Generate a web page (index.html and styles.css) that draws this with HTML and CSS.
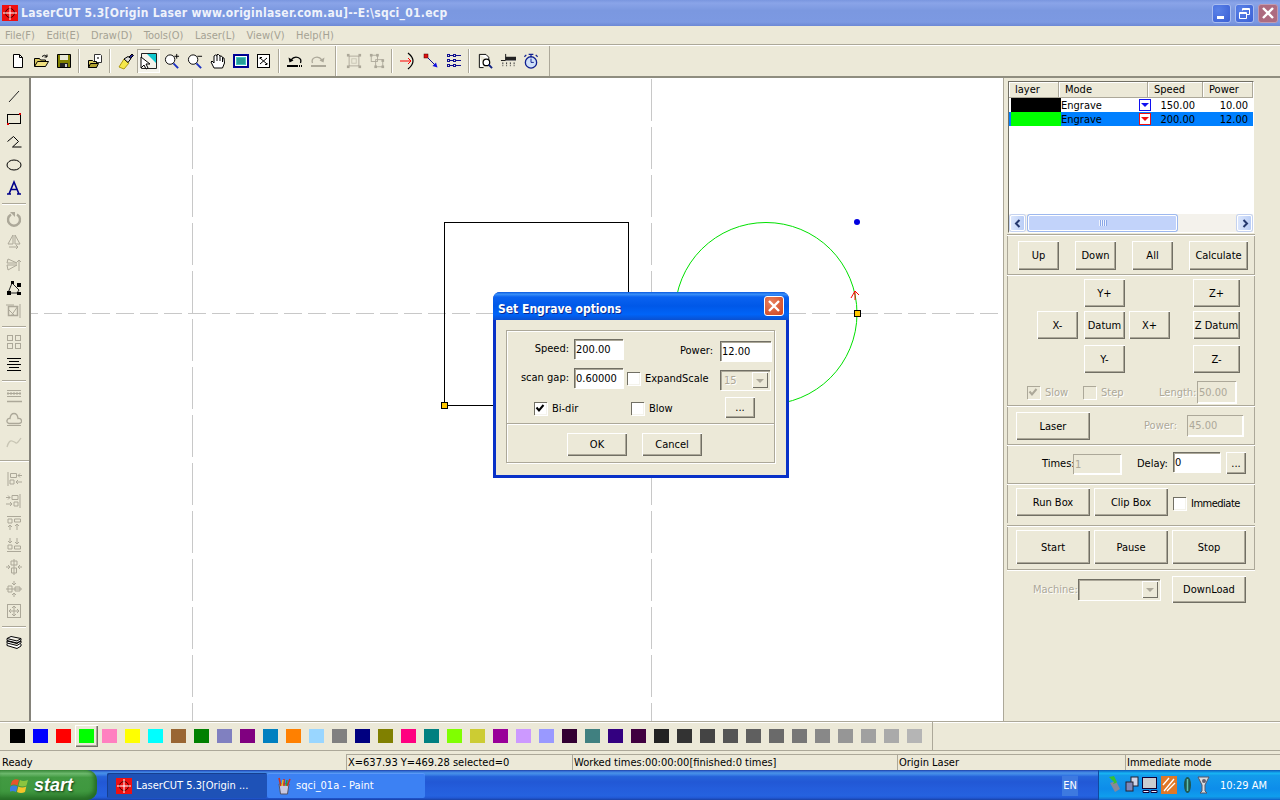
FILE: index.html
```html
<!DOCTYPE html>
<html lang="en">
<head>
    <meta charset="UTF-8">
    <title>LaserCUT 5.3</title>
    <link rel="stylesheet" href="styles.css">
</head>
<body>
<div class="screen">

    <div class="titlebar">
        <svg class="app-icon" width="16" height="16" viewBox="0 0 16 16"><rect width="16" height="16" fill="#f01010"/><circle cx="8" cy="8" r="4.5" fill="none" stroke="#400"/><path d="M8 1v14M1 8h14" stroke="#fff"/></svg>
        <span class="title-text">LaserCUT 5.3[Origin Laser www.originlaser.com.au]--E:\sqci_01.ecp</span>
        <div class="win-btns">
            <div class="win-btn"><svg width="19" height="19" viewBox="0 0 19 19"><rect x="5" y="12" width="7" height="3" fill="#fff"/></svg></div>
            <div class="win-btn"><svg width="19" height="19" viewBox="0 0 19 19"><path d="M4.5 8.5h7v6h-7zM4.5 9.5h7M7.5 6.5v-2h7v6h-3M7.5 5.5h7" fill="none" stroke="#fff"/></svg></div>
            <div class="win-btn close"><svg width="20" height="19" viewBox="0 0 20 19"><path d="M5 4l10 10M15 4L5 14" stroke="#fff" stroke-width="2.4"/></svg></div>
        </div>
    </div>

    <div class="menubar">
        <span>File(F)</span><span>Edit(E)</span><span>Draw(D)</span><span>Tools(O)</span><span>Laser(L)</span><span>View(V)</span><span>Help(H)</span>
    </div>

    <div class="toolbar">
        <div class="tb-group first">
            <div class="tb"><svg viewBox="0 0 16 16"><path d="M3.5 1.5h6l3 3v10h-9z" fill="#fff" stroke="#000"/><path d="M9.5 1.5v3h3" fill="none" stroke="#000"/></svg></div>
            <div class="tb"><svg viewBox="0 0 16 16"><path d="M1.5 5.500h5l1 1.500h5v6h-11z" fill="#d8c860" stroke="#000"/><path d="M1.500 13.500l3-5h11l-3 5z" fill="#f0e080" stroke="#000"/><path d="M9 3.500q2.500-2.500 5 0M14 1.500v2.500h-2.500" fill="none" stroke="#000"/></svg></div>
            <div class="tb"><svg viewBox="0 0 16 16"><path d="M1.500 1.500h13v13h-13z" fill="#808000" stroke="#000"/><rect x="4" y="2" width="8" height="5" fill="#e8e8d8"/><rect x="4" y="10" width="8" height="4" fill="#222"/><rect x="9" y="11" width="2" height="3" fill="#ccc"/></svg></div>
            <div class="tb-sep"></div>
            <div class="tb"><svg viewBox="0 0 16 16"><path d="M7.500 1.500h6l1 1v7h-7z" fill="#fff" stroke="#333"/><rect x="10" y="4" width="2" height="2" fill="#777"/><path d="M1.500 7.500h4l1 1h3v6h-8z" fill="#d8c860" stroke="#000"/><path d="M1.500 14.500l2-4h8l-2 4z" fill="#b0a030" stroke="#000"/></svg></div>
            <div class="tb-sep"></div>
            <div class="tb"><svg viewBox="0 0 16 16"><path d="M1 14l5-8 5 4-5 6z" fill="#f6e84a" stroke="#b09a10"/><path d="M6 6l4 3.500 3-4-3-2z" fill="#ddd" stroke="#000"/><path d="M11 4l3-3 1.500 1.500-3 3z" fill="#202090" stroke="#000"/></svg></div>
            <div class="tb pressed"><svg viewBox="0 0 18 18"><path d="M1.500 1.500h15v15h-15z" fill="none" stroke="#222"/><path d="M7 2h9v9z" fill="#10c8d0"/><path d="M1 5l0 11 3-3 2 4 2-1-2-4h4z" fill="#fff" stroke="#000"/></svg></div>
            <div class="tb"><svg viewBox="0 0 17 17"><circle cx="6.500" cy="7" r="5" fill="#fff" stroke="#000"/><path d="M10 11l5 5" stroke="#1a30c0" stroke-width="2"/><path d="M11 3.500h5M13.500 1v5" stroke="#000"/></svg></div>
            <div class="tb"><svg viewBox="0 0 17 17"><circle cx="6.500" cy="7" r="5" fill="#fff" stroke="#000"/><path d="M10 11l5 5" stroke="#1a30c0" stroke-width="2"/><path d="M11 3.500h5" stroke="#000"/></svg></div>
            <div class="tb"><svg viewBox="0 0 16 16"><path d="M4 15L1 9l1-1 2 2V3l1.500-1L7 3V1.500h1.500L10 3l1.500 0 1 1.500 1.500.5.500 5-2 5z" fill="#fff" stroke="#000"/><path d="M7 3v5M10 3v5M12.500 4.500V9" stroke="#000"/></svg></div>
            <div class="tb"><svg viewBox="0 0 16 16"><rect x=".5" y="1.500" width="15" height="13" fill="#fff" stroke="#0000a0" stroke-width="1"/><rect x="1.500" y="2.500" width="13" height="11" fill="none" stroke="#000080"/><rect x="3" y="4" width="10" height="8" fill="#40c8c0"/><path d="M4 6h8M4 8h8M4 10h8" stroke="#107070"/></svg></div>
            <div class="tb"><svg viewBox="0 0 16 16"><rect x="1.500" y="1.500" width="12" height="13" fill="#fff" stroke="#000"/><path d="M4 11l7-6M4 6v-1.500h2M11 10v1.500h-2M4 5l7 6" stroke="#000" fill="none"/></svg></div>
            <div class="tb-sep"></div>
            <div class="tb"><svg viewBox="0 0 16 16"><path d="M4 7q3-4 7-2.500t2.500 5.500" fill="none" stroke="#000" stroke-width="1.300"/><path d="M1.500 4.500l1 5 4-2z" fill="#000"/><path d="M0 13h11" stroke="#000" stroke-width="2"/><path d="M12 13h3" stroke="#000" stroke-dasharray="1 1" stroke-width="2"/></svg></div>
            <div class="tb off"><svg viewBox="0 0 16 16"><path d="M12 7q-3-4-7-2.500T2.500 10" fill="none" stroke="#aca899" stroke-width="1.300"/><path d="M14.500 4.500l-1 5-4-2z" fill="#aca899"/><path d="M1 13h15" stroke="#aca899" stroke-width="2"/></svg></div>
        </div>
        <div class="tb-group second">
            <div class="tb"><svg viewBox="0 0 18 18"><rect x="3.500" y="3.500" width="11" height="11" fill="none" stroke="#aca899"/><rect x="1" y="1" width="3" height="3" fill="#aca899"/><rect x="14" y="1" width="3" height="3" fill="#aca899"/><rect x="1" y="14" width="3" height="3" fill="#aca899"/><rect x="14" y="14" width="3" height="3" fill="#aca899"/><rect x="6.500" y="6.500" width="5" height="5" fill="none" stroke="#c8c5b4"/></svg></div>
            <div class="tb"><svg viewBox="0 0 18 18"><rect x="2.500" y="2.500" width="7" height="7" fill="none" stroke="#aca899"/><rect x="7.500" y="7.500" width="8" height="8" fill="none" stroke="#aca899"/><rect x="1" y="1" width="3" height="3" fill="#aca899"/><rect x="8" y="1" width="3" height="3" fill="#aca899"/><rect x="14" y="7" width="3" height="3" fill="#aca899"/><rect x="14" y="14" width="3" height="3" fill="#aca899"/><rect x="6" y="14" width="3" height="3" fill="#aca899"/></svg></div>
            <div class="tb-sep"></div>
            <div class="tb"><svg viewBox="0 0 16 16"><path d="M0 8h11" stroke="#f00"/><path d="M8 5l3 3-3 3" fill="none" stroke="#f00"/><path d="M8 0Q18 8 8 16" fill="none" stroke="#000" stroke-width="1.200"/></svg></div>
            <div class="tb"><svg viewBox="0 0 16 16"><rect x="1" y="1" width="4" height="4" fill="#e01010" stroke="#400" stroke-width=".5"/><path d="M5 5l8 8" stroke="#10108a"/><path d="M14.500 14.500l-5-1.500 3.500-3.500z" fill="#1010e0"/></svg></div>
            <div class="tb"><svg viewBox="0 0 16 16"><g fill="none" stroke="#101090"><rect x="1.500" y="1.500" width="2" height="2"/><rect x="7.500" y="1.500" width="2" height="2"/><rect x="1.500" y="6.500" width="2" height="2"/><rect x="7.500" y="6.500" width="2" height="2"/><rect x="1.500" y="11.500" width="2" height="2"/><rect x="7.500" y="11.500" width="2" height="2"/><path d="M4 2.500h3M10 2.500h5M4 7.500h3M10 7.500h5M4 12.500h3M10 12.500h5"/></g></svg></div>
            <div class="tb-sep"></div>
            <div class="tb"><svg viewBox="0 0 17 17"><path d="M2.500 1.500h7l3 3v3M7 15.500H2.500v-14" fill="#fff" stroke="#000"/><circle cx="10" cy="10" r="3.500" fill="#fff" stroke="#000" stroke-width="1.300"/><path d="M12.500 12.500l3.500 3.500" stroke="#102080" stroke-width="2"/></svg></div>
            <div class="tb"><svg viewBox="0 0 17 17"><path d="M6 4h11v4H6z" fill="#222"/><path d="M1 8h5M6 1v7" stroke="#111"/><path d="M3 10v4M7 10v4M11 10v4M15 10v4" stroke="#333" stroke-dasharray="2 1"/><path d="M6 8h11" stroke="#888"/></svg></div>
            <div class="tb"><svg viewBox="0 0 17 17"><circle cx="8.500" cy="10" r="6" fill="#cfe0f8" stroke="#102090" stroke-width="1.400"/><path d="M8.500 6v4h3" fill="none" stroke="#102090"/><path d="M6 1.500h5M8.500 1.500v3M1.500 4l2-2M15.500 4l-2-2" stroke="#102090" stroke-width="1.300"/></svg></div>
        </div>
    </div>

    <div class="main">
        <div class="lefttools">
            <div class="lt"><svg viewBox="0 0 16 16"><path d="M3 14L13 3" stroke="#222"/></svg></div>
            <div class="lt"><svg viewBox="0 0 16 16"><rect x="1.500" y="3.500" width="13" height="9" fill="none" stroke="#000"/><rect x="13" y="2" width="2" height="2" fill="#d00"/><rect x="1" y="12" width="2" height="2" fill="#d00"/></svg></div>
            <div class="lt"><svg viewBox="0 0 16 16"><path d="M1.500 7.500l6-5 5 5-6 5.500h9" fill="none" stroke="#000"/></svg></div>
            <div class="lt"><svg viewBox="0 0 16 16"><ellipse cx="8" cy="8" rx="7" ry="5" fill="none" stroke="#000"/></svg></div>
            <div class="lt"><svg viewBox="0 0 16 16"><path d="M1 14h4M11 14h4M3 14L8 2l5 12M5 9.500h6" fill="none" stroke="#00008a" stroke-width="1.600"/></svg></div>
            <div class="lt-sep"></div>
            <div class="lt"><svg viewBox="0 0 16 16"><path d="M5 3.500a6 6 0 1 0 6 0" fill="none" stroke="#aca899" stroke-width="2.400"/><path d="M4 1h5v5z" fill="#aca899"/></svg></div>
            <div class="lt"><svg viewBox="0 0 16 16"><path d="M7 1v9H2zM9 1v9h5z" fill="none" stroke="#aca899"/><path d="M3 13h9M10 11l2 2-2 2" fill="none" stroke="#aca899"/></svg></div>
            <div class="lt"><svg viewBox="0 0 16 16"><path d="M1 6h10L2 2zM1 8h10l-9 5z" fill="none" stroke="#aca899"/><path d="M13 14V3M11 5l2-2 2 2" fill="none" stroke="#aca899"/></svg></div>
            <div class="lt"><svg viewBox="0 0 16 16"><path d="M2 13L6 3l7 7-2 3z" fill="none" stroke="#222"/><g fill="#000"><rect x="1" y="11" width="4" height="4"/><rect x="5" y="1" width="3" height="3"/><rect x="11" y="3" width="4" height="4"/><rect x="11" y="12" width="4" height="3"/></g></svg></div>
            <div class="lt"><svg viewBox="0 0 16 16"><rect x="2.500" y="3.500" width="9" height="9" fill="none" stroke="#aca899" stroke-width="1.500"/><path d="M2 6l7 7M12 3L5 13M14 1v14M0 2h8" fill="none" stroke="#aca899"/></svg></div>
            <div class="lt-sep"></div>
            <div class="lt"><svg viewBox="0 0 16 16"><g fill="none" stroke="#aca899"><rect x="1.500" y="1.500" width="5" height="5"/><rect x="9.500" y="1.500" width="5" height="5"/><rect x="1.500" y="9.500" width="5" height="5"/><rect x="9.500" y="9.500" width="5" height="5"/></g></svg></div>
            <div class="lt"><svg viewBox="0 0 16 16"><path d="M1 1.500h14M3 4.500h10M1 7.500h14M3 10.500h10M1 13.500h14" stroke="#000" stroke-width="1.200"/></svg></div>
            <div class="lt-sep"></div>
            <div class="lt"><svg viewBox="0 0 16 16"><path d="M1 2.500h14M1 5.500h14M1 8.500h14" stroke="#aca899"/><path d="M1 13.500h15" stroke="#aca899" stroke-width="1.500"/><path d="M2 2v8M5 2v8M8 2v8M11 2v8M14 2v8" stroke="#aca899" stroke-dasharray="1 1"/></svg></div>
            <div class="lt"><svg viewBox="0 0 16 16"><path d="M3 12.500q-2.500-.5-2-3t3-2q.5-5 4-5t4 5q3-.5 3.500 2t-2.500 3z" fill="none" stroke="#aca899" stroke-width="1.300"/><path d="M1 14.500h14" stroke="#aca899"/></svg></div>
            <div class="lt"><svg viewBox="0 0 16 16"><path d="M1 13q2-7 5-6t4 2 5-5" fill="none" stroke="#c8c5b4" stroke-width="1.300"/></svg></div>
            <div class="lt-sep wide"></div>
            <div class="lt short"><svg viewBox="0 0 16 16"><path d="M2 1v14" stroke="#aca899"/><path d="M4.500 2.500h6v4h-6zM4 9h4v4H4z" fill="none" stroke="#aca899"/><path d="M16 4.500h-4M14 2.500l-2 2 2 2M16 11h-6M12 9l-2 2 2 2" fill="none" stroke="#aca899"/></svg></div>
            <div class="lt short"><svg viewBox="0 0 16 16"><path d="M14 1v14" stroke="#aca899"/><path d="M6 2.500h6v4H6zM8 9h4v4H8z" fill="none" stroke="#aca899"/><path d="M0 4.500h4M2 2.500l2 2-2 2M0 11h6M4 9l2 2-2 2" fill="none" stroke="#aca899"/></svg></div>
            <div class="lt short"><svg viewBox="0 0 16 16"><path d="M1 1.500h14" stroke="#aca899"/><path d="M2 4h4v4H2zM8.500 4h6v3h-6z" fill="none" stroke="#aca899"/><path d="M4 15v-5M2 12l2-2 2 2M11 15V9M9 11l2-2 2 2" fill="none" stroke="#aca899"/></svg></div>
            <div class="lt short"><svg viewBox="0 0 16 16"><path d="M1 14.500h14" stroke="#aca899"/><path d="M2 8h4v4H2zM8.500 9h6v3h-6z" fill="none" stroke="#aca899"/><path d="M4 1v5M2 4l2 2 2-2M11 1v6M9 5l2 2 2-2" fill="none" stroke="#aca899"/></svg></div>
            <div class="lt short"><svg viewBox="0 0 16 16"><path d="M5 2h6v4H5zM5.500 9h5v5h-5z" fill="none" stroke="#aca899"/><path d="M8 0v16M0 8h4M2 6l2 2-2 2M16 8h-4M14 6l-2 2 2 2" fill="none" stroke="#aca899"/></svg></div>
            <div class="lt short"><svg viewBox="0 0 16 16"><path d="M2 5h4v6H2zM9 6h5v4H9z" fill="none" stroke="#aca899"/><path d="M0 8h16M8 0v4M6 2l2 2 2-2M8 16v-4M6 14l2-2 2 2" fill="none" stroke="#aca899"/></svg></div>
            <div class="lt short"><svg viewBox="0 0 16 16"><rect x="1.500" y="1.500" width="13" height="13" fill="none" stroke="#aca899"/><path d="M8 3v10M3 8h10M6 5l2-2 2 2M6 11l2 2 2-2M5 6L3 8l2 2M11 6l2 2-2 2" fill="none" stroke="#aca899"/></svg></div>
            <div class="lt-sep narrow"></div>
            <div class="lt"><svg viewBox="0 0 16 16"><path d="M1 3.500l4-2 10 2-4 2.500zM1 3.500v2l10 2.500 4-2.500v-2M1 6l10 2.500 4-2.500v2l-4 2.500L1 8zM1 8.500v2l10 3 4-2.500v-2" fill="#fff" stroke="#000"/></svg></div>
        </div>

        <div class="canvas">
            <svg class="drawing" width="972" height="643" viewBox="31 78 972 643">
                <g stroke="#c8c8c8" fill="none">
                    <path stroke-dasharray="42 6" d="M192.500 79v642"/>
                    <path stroke-dasharray="42 6" d="M651.500 79v642"/>
                    <path stroke-dasharray="18 6" stroke-dashoffset="11" d="M31 313.500h968"/>
                </g>
                <rect x="444.500" y="222.500" width="184" height="183" fill="none" stroke="#000"/>
                <circle cx="766" cy="313.500" r="91" fill="none" stroke="#00e000"/>
                <circle cx="857" cy="222" r="3" fill="#0000e0"/>
                <path d="M851 298l4-7 4 4M855 291v9" fill="none" stroke="#f00"/>
                <rect x="441.500" y="402.500" width="6" height="6" fill="#ffc800" stroke="#000"/>
                <rect x="854.500" y="310.500" width="6" height="6" fill="#ffc800" stroke="#000"/>
            </svg>
        </div>

        <div class="panel">
            <div class="layerlist">
                <div class="lhead">
                    <span class="col-layer">layer</span><span class="col-mode">Mode</span><span class="col-speed">Speed</span><span class="col-power">Power</span>
                </div>
                <div class="lrow">
                    <i class="lcolor black"></i><span class="lmode">Engrave</span><i class="lbox blue"></i><span class="lspeed">150.00</span><span class="lpower">10.00</span>
                </div>
                <div class="lrow sel">
                    <i class="lcolor green"></i><span class="lmode">Engrave</span><i class="lbox red"></i><span class="lspeed">200.00</span><span class="lpower">12.00</span>
                </div>
                <div class="lspace"></div>
                <div class="hscroll">
                    <div class="sb-btn"><svg width="14" height="15" viewBox="0 0 14 15"><path d="M8.500 4l-3.500 3.500 3.500 3.500" fill="none" stroke="#24386e" stroke-width="2"/></svg></div>
                    <div class="sb-thumb"><span></span></div>
                    <div class="sb-track"></div>
                    <div class="sb-btn"><svg width="14" height="15" viewBox="0 0 14 15"><path d="M5.500 4l3.500 3.500-3.500 3.500" fill="none" stroke="#24386e" stroke-width="2"/></svg></div>
                </div>
            </div>

            <div class="group g-order">
                <div class="btn">Up</div><div class="btn">Down</div><div class="btn">All</div><div class="btn">Calculate</div>
            </div>

            <div class="group g-jog">
                <div class="jog">
                    <div class="btn jog-y1">Y+</div>
                    <div class="btn z jog-z1">Z+</div>
                    <div class="btn">X-</div>
                    <div class="btn">Datum</div>
                    <div class="btn">X+</div>
                    <div class="btn z">Z Datum</div>
                    <div class="btn jog-y2">Y-</div>
                    <div class="btn z jog-z2">Z-</div>
                </div>
                <div class="jog-opts">
                    <label class="opt slow off"><i class="check dim"><svg width="10" height="10" viewBox="0 0 10 10"><path d="M1.500 4.500l2.500 3 4.500-5.500" fill="none" stroke="#aca899" stroke-width="2"/></svg></i>Slow</label>
                    <label class="opt step off"><i class="check dim"></i>Step</label>
                    <span class="opt-len off">Length:</span>
                    <div class="field dis len">50.00</div>
                </div>
            </div>

            <div class="group g-laser">
                <div class="btn wide">Laser</div>
                <span class="off power-label">Power:</span>
                <div class="field dis power">45.00</div>
            </div>

            <div class="group g-times">
                <span class="times-label">Times:</span>
                <div class="field dis times">1</div>
                <span class="delay-label">Delay:</span>
                <div class="field delay">0</div>
                <div class="btn more">...</div>
            </div>

            <div class="group g-box">
                <div class="btn wide">Run Box</div>
                <div class="btn wide">Clip Box</div>
                <label class="opt imm"><i class="check"></i>Immediate</label>
            </div>

            <div class="group g-run">
                <div class="btn wide">Start</div><div class="btn wide">Pause</div><div class="btn wide">Stop</div>
            </div>

            <div class="group g-machine">
                <span class="off machine-label">Machine:</span>
                <div class="combo machine"><i class="combo-arrow"></i></div>
                <div class="btn wide">DownLoad</div>
            </div>
        </div>
    </div>

    <div class="colorbar">
        <div class="swatches">
            <i class="s1"></i><i class="s2"></i><i class="s3"></i><i class="s4 current"></i><i class="s5"></i><i class="s6"></i><i class="s7"></i><i class="s8"></i><i class="s9"></i><i class="s10"></i>
            <i class="s11"></i><i class="s12"></i><i class="s13"></i><i class="s14"></i><i class="s15"></i><i class="s16"></i><i class="s17"></i><i class="s18"></i><i class="s19"></i><i class="s20"></i>
            <i class="s21"></i><i class="s22"></i><i class="s23"></i><i class="s24"></i><i class="s25"></i><i class="s26"></i><i class="s27"></i><i class="s28"></i><i class="s29"></i><i class="s30"></i>
            <i class="s31"></i><i class="s32"></i><i class="s33"></i><i class="s34"></i><i class="s35"></i><i class="s36"></i><i class="s37"></i><i class="s38"></i><i class="s39"></i><i class="s40"></i>
        </div>
    </div>

    <div class="statusbar">
        <span class="pane ready">Ready</span>
        <span class="pane p2">X=637.93 Y=469.28 selected=0</span>
        <span class="pane p3">Worked times:00:00:00[finished:0 times]</span>
        <span class="pane p4">Origin Laser</span>
        <span class="pane p5">Immediate mode</span>
    </div>

    <div class="taskbar">
        <div class="startbtn">
            <svg width="20" height="19" viewBox="0 0 20 19"><path d="M2 5q3-3 7-1l-1.500 5.500q-3.500-2-7 0z" fill="#e8542a"/><path d="M10 4q3 2 8 0l-1.500 5.500q-4 2-8 0z" fill="#8bc53f"/><path d="M.5 10.500q3-2 7 0L6 16q-3.500-2-7 0z" fill="#3b7de0"/><path d="M8.300 10.500q4 2 8 0L15 16q-4 2-8 0z" fill="#f5c52a"/></svg>
            <span>start</span>
        </div>
        <div class="task active">
            <svg width="16" height="16" viewBox="0 0 16 16"><rect width="16" height="16" fill="#f01010"/><circle cx="8" cy="8" r="4.500" fill="none" stroke="#400"/><path d="M8 1v14M1 8h14" stroke="#fff"/></svg>
            <span>LaserCUT 5.3[Origin ...</span>
        </div>
        <div class="task">
            <svg width="16" height="18" viewBox="0 0 16 18"><path d="M3 7h10l-1.500 10h-7z" fill="#c8c8e0" stroke="#556"/><path d="M5 9L3 1M8 9V2M11 9l3-7" stroke="#d03020" stroke-width="1.600"/><path d="M6 9l1-6" stroke="#e8c020" stroke-width="1.500"/><path d="M10 9l1-6" stroke="#20a040" stroke-width="1.500"/></svg>
            <span>sqci_01a - Paint</span>
        </div>
        <div class="lang">EN</div>
        <div class="tray">
            <svg width="14" height="18" viewBox="0 0 14 18"><path d="M2 7l6-2 4 8-5 3z" fill="#889"/><path d="M1 1l5 5-1 2 3-1 1-1-3-6z" fill="#38c030"/></svg>
            <svg width="14" height="18" viewBox="0 0 14 18"><rect x="6" y="1" width="7" height="9" fill="#d0d4e8" stroke="#223"/><rect x="1" y="6" width="7" height="9" fill="#8088b8" stroke="#223"/></svg>
            <svg width="16" height="18" viewBox="0 0 16 18"><rect x=".5" y="1.500" width="14" height="11" fill="#c8ccd0" stroke="#103"/><path d="M1 14.500h6v2H1zM9 14.500h6v2H9z" fill="#eef" stroke="#103"/></svg>
            <svg width="16" height="18" viewBox="0 0 16 18"><rect width="16" height="18" fill="#e07828"/><path d="M3 15L13 3M6 15l8-8M2 9l6-7" stroke="#fff" stroke-width="1.300"/></svg>
            <svg class="ring" width="9" height="18" viewBox="0 0 9 18"><ellipse cx="4.500" cy="9" rx="3.500" ry="8" fill="#205850"/><path d="M4.500 3v12" stroke="#60c0b0" stroke-width="1.500"/></svg>
            <svg width="13" height="18" viewBox="0 0 13 18"><path d="M1 1h11L8 9v6l2 2H3l2-2V9z" fill="#d8dce0" stroke="#556"/><circle cx="7" cy="5" r="2" fill="#606070"/></svg>
            <span class="clock">10:29 AM</span>
        </div>
    </div>

    <div class="dialog">
        <div class="dlg-title">
            <span class="dlg-name">Set Engrave options</span>
            <div class="dlg-close"><svg width="20" height="20" viewBox="0 0 20 20"><path d="M5 5l10 10M15 5L5 15" stroke="#fff" stroke-width="2.400"/></svg></div>
        </div>
        <div class="dlg-body">
            <div class="dlg-frame">
                <div class="dlg-grid">
                    <span class="dlg-label">Speed:</span>
                    <div class="field on-dlg">200.00</div>
                    <span class="dlg-label right low">Power:</span>
                    <div class="field on-dlg low power-field">12.00</div>

                    <span class="dlg-label">scan gap:</span>
                    <div class="field on-dlg">0.60000</div>
                    <label class="opt expand"><i class="check"></i><span>ExpandScale</span></label>
                    <div class="combo dlg-combo off"><span>15</span><i class="combo-arrow"></i></div>

                    <label class="opt bidir"><i class="check"><svg width="10" height="10" viewBox="0 0 10 10"><path d="M1.500 4.500l2.500 3 4.500-5.500" fill="none" stroke="#000" stroke-width="2"/></svg></i>Bi-dir</label>
                    <label class="opt blow"><i class="check"></i>Blow</label>
                    <div class="btn dots">...</div>
                </div>
                <div class="dlg-actions">
                    <div class="btn dlg-btn">OK</div>
                    <div class="btn dlg-btn">Cancel</div>
                </div>
            </div>
        </div>
    </div>

</div>
</body>
</html>
```

FILE: styles.css
```css
* {
    box-sizing: border-box;
}
html, body {
    margin: 0;
    padding: 0;
}
body {
    font-family: "DejaVu Sans", "Liberation Sans", sans-serif;
    font-stretch: condensed;
    font-size: 11px;
    color: #000;
    background: #ece9d8;
}
i {
    display: block;
    font-style: normal;
}
svg {
    display: block;
}
.screen {
    position: relative;
    width: 1280px;
    height: 800px;
    overflow: hidden;
    display: flex;
    flex-direction: column;
    background: #ece9d8;
}

/* title bar */
.titlebar {
    height: 26px;
    flex: none;
    display: flex;
    align-items: center;
    padding: 0 2px 0 2px;
    background: linear-gradient(#7a96df 0, #8aa4e8 12%, #7b98e0 40%, #7c99e2 85%, #6c88d4 100%);
}
.app-icon {
    margin-right: 3px;
}
.title-text {
    color: #eef2fb;
    font-weight: bold;
    font-size: 12px;
    letter-spacing: 0.28px;
}
.win-btns {
    margin-left: auto;
    display: flex;
    gap: 4px;
}
.win-btn {
    width: 19px;
    height: 19px;
    border: 1px solid #a9bdf0;
    border-radius: 3px;
    background: radial-gradient(circle at 30% 30%, #5a82e8, #3a5fd4);
}
.win-btn.close {
    width: 20px;
    background: #ad6b80;
    border-color: #c09ab0;
}
.win-btn svg {
    margin: -1px;
}

/* menu */
.menubar {
    height: 19px;
    flex: none;
    display: flex;
    align-items: center;
    padding-left: 5px;
    gap: 11.5px;
    color: #a5a294;
}

/* toolbars */
.toolbar {
    height: 33px;
    flex: none;
    display: flex;
    border-top: 1px solid #fff;
    border-bottom: 2px solid #8f8d7f;
    box-shadow: 0 -1px 0 #aca899;
    background: #ece9d8;
}
.tb-group {
    display: flex;
    align-items: center;
}
.tb-group.first {
    width: 336px;
    padding-left: 6px;
    border-right: 1px solid #aca899;
}
.tb-group.second {
    width: 214px;
    padding-left: 5px;
    border-left: 1px solid #fff;
    border-right: 1px solid #aca899;
}
.tb {
    width: 23px;
    height: 24px;
    display: flex;
    align-items: center;
    justify-content: center;
}
.tb svg {
    width: 16px;
    height: 16px;
    overflow: visible;
}
.tb.pressed {
    background: #f5f4ec;
    box-shadow: inset 1px 1px #aca899, inset -1px -1px #fff;
}
.tb.pressed svg {
    width: 18px;
    height: 18px;
}
.tb-sep {
    width: 8px;
    height: 24px;
}
.tb-sep::after {
    content: "";
    display: block;
    width: 1px;
    height: 24px;
    margin-left: 3px;
    background: #aca899;
    box-shadow: 1px 0 #fff;
}

/* main */
.main {
    height: 643px;
    flex: none;
    display: flex;
}
.lefttools {
    width: 29px;
    flex: none;
    padding: 6px 1px 0 0;
    display: flex;
    flex-direction: column;
    align-items: center;
}
.lt {
    width: 24px;
    height: 23px;
    flex: none;
    display: flex;
    align-items: center;
    justify-content: center;
}
.lt.short {
    height: 22px;
}
.lt svg {
    width: 16px;
    height: 16px;
}
.lt-sep {
    width: 24px;
    height: 8px;
    flex: none;
    display: flex;
    align-items: center;
}
.lt-sep::after {
    content: "";
    display: block;
    width: 100%;
    height: 1px;
    background: #aca899;
    box-shadow: 0 1px #fff;
}
.lt-sep.wide {
    width: 29px;
    height: 15px;
}
.lt-sep.narrow {
    height: 9px;
}
.canvas {
    width: 974px;
    flex: none;
    background: #fff;
    border-left: 2px solid #85837a;
}
.drawing {
    display: block;
}

/* right panel */
.panel {
    flex: none;
    width: 277px;
    padding: 3px 0 0 3px;
    border-left: 1px solid #aca899;
    display: flex;
    flex-direction: column;
}
.layerlist {
    width: 246px;
    height: 152px;
    margin-left: 1px;
    flex: none;
    border: 1px solid;
    border-color: #716f64 #fff #fff #716f64;
    background: #fff;
    display: flex;
    flex-direction: column;
}
.lhead {
    height: 16px;
    flex: none;
    display: flex;
    background: #ece9d8;
}
.lhead span {
    height: 16px;
    padding: 1px 0 0 6px;
    border-right: 1px solid #aca899;
    box-shadow: inset 1px 1px #fff;
    border-bottom: 1px solid #aca899;
}
.col-layer { width: 50px; }
.col-mode { width: 89px; }
.col-speed { width: 55px; }
.col-power { width: 50px; }
.lrow {
    height: 14px;
    flex: none;
    display: flex;
    align-items: center;
    padding-left: 2px;
    margin-top: 0;
}
.lrow.sel {
    background: #0080ff;
}
.lcolor {
    width: 50px;
    height: 14px;
}
.lcolor.black { background: #000; }
.lcolor.green { background: #00ff00; }
.lmode {
    width: 78px;
}
.lbox {
    width: 12px;
    height: 12px;
    border: 1px solid;
    background: #fff;
    position: relative;
}
.lbox::after {
    content: "";
    position: absolute;
    left: 1px;
    top: 3px;
    border-left: 4px solid transparent;
    border-right: 4px solid transparent;
    border-top: 4px solid;
}
.lbox.blue { color: #1010f0; }
.lbox.red { color: #f01010; }
.lspeed {
    width: 44px;
    text-align: right;
}
.lpower {
    width: 53px;
    text-align: right;
}
.lspace {
    flex: 1;
}
.hscroll {
    height: 18px;
    flex: none;
    padding: 1px 1px;
    display: flex;
    background: #f4f2ec;
}
.sb-btn {
    width: 15px;
    background: linear-gradient(90deg, #dbe6fc, #b9cdf6);
    border: 1px solid #fff;
    border-radius: 2px;
    box-shadow: 0 0 0 1px #c4d2f0;
}
.sb-thumb {
    width: 149px;
    margin-left: 3px;
    background: #c2d3fa;
    border: 1px solid #fff;
    border-radius: 2px;
    box-shadow: 0 0 0 1px #9db8ee;
    display: flex;
    align-items: center;
    justify-content: center;
}
.sb-thumb span {
    width: 8px;
    height: 6px;
    background: repeating-linear-gradient(90deg, #eef3fe 0 1px, #8aa8e8 1px 2px);
}
.sb-track {
    flex: 1;
}

.group {
    width: 248px;
    flex: none;
    border-top: 1px solid #aca899;
    box-shadow: inset 0 1px #fff, inset -1px 0 #aca899, inset 1px 0 #aca899;
}
.btn {
    display: flex;
    align-items: center;
    justify-content: center;
    white-space: nowrap;
    background: #ece9d8;
    box-shadow: inset 1px 1px #fff, inset -1px -1px #716f64, inset -2px -2px #aca899;
}
.field {
    display: flex;
    align-items: center;
    background: #fff;
    padding: 0 0 0 2px;
    box-shadow: inset 1px 1px #716f64, inset 2px 2px #aca899, 1px 1px #fff;
}
.field.dis {
    background: #ece9d8;
    color: #aca899;
    box-shadow: inset 1px 1px #aca899, inset -1px -1px #fff, 1px 1px #fff;
}
.off {
    color: #aca899;
    text-shadow: 1px 1px #fff;
}
.opt {
    display: flex;
    align-items: center;
}
.check {
    width: 13px;
    height: 13px;
    flex: none;
    padding: 1px 0 0 1px;
    background: #fff;
    box-shadow: inset 1px 1px #716f64, inset -1px -1px #f4f3ec, 1px 1px #fff;
}
.check.dim {
    background: #ece9d8;
    box-shadow: inset 1px 1px #aca899, 1px 1px #fff;
}
.combo {
    position: relative;
    box-shadow: inset 1px 1px #716f64, inset 2px 2px #aca899, 1px 1px #fff;
    display: flex;
    align-items: center;
    padding-left: 4px;
}
.combo-arrow {
    position: absolute;
    right: 2px;
    top: 2px;
    bottom: 2px;
    width: 16px;
    background: #ece9d8;
    box-shadow: inset 1px 1px #fff, inset -1px -1px #716f64;
}
.combo-arrow::after {
    content: "";
    position: absolute;
    left: 4px;
    top: 7px;
    border-left: 4px solid transparent;
    border-right: 4px solid transparent;
    border-top: 4px solid #aca899;
}

.g-order {
    margin-top: 1px;
    height: 40px;
    padding: 6px 0 0 11px;
    display: grid;
    grid-template-columns: 41px 41px 41px 59px;
    column-gap: 16px;
    grid-template-rows: 29px;
}
.g-jog {
    height: 131px;
    padding: 4px 0 0 30px;
}
.jog {
    display: grid;
    grid-template-columns: 47px 45px 64px 47px;
    grid-template-rows: 32px 34px 28px;
}
.jog .btn {
    width: 41px;
    height: 28px;
}
.jog .btn.z {
    width: 47px;
}
.jog-y1 { grid-column: 2; }
.jog-z1 { grid-column: 4; }
.jog-y2 { grid-column: 2; }
.jog-z2 { grid-column: 4; }
.jog-opts {
    margin: 8px 0 0 -10px;
    height: 22px;
    display: flex;
    align-items: center;
}
.slow { width: 56px; }
.step { width: 76px; }
.opt .check {
    margin-right: 5px;
}
.opt-len { width: 38px; }
.len {
    width: 39px;
    height: 22px;
}
.g-laser {
    height: 39px;
    padding: 6px 0 0 9px;
    display: flex;
    align-items: flex-start;
}
.btn.wide {
    width: 74px;
    flex: none;
}
.g-laser .btn {
    height: 28px;
}
.power-label {
    margin: 7px 0 0 54px;
    width: 43px;
}
.power {
    width: 56px;
    height: 21px;
    margin-top: 3px;
}
.g-times {
    height: 39px;
    padding: 7px 0 0 35px;
    display: flex;
    align-items: flex-start;
}
.times-label {
    width: 31px;
    margin-top: 5px;
}
.times {
    width: 48px;
    height: 20px;
    margin-top: 2px;
}
.delay-label {
    width: 36px;
    margin: 5px 0 0 16px;
}
.delay {
    width: 47px;
    height: 20px;
}
.more {
    width: 20px;
    height: 22px;
    margin-left: 6px;
}
.g-box {
    height: 40px;
    padding: 4px 0 0 9px;
    display: flex;
    gap: 4px;
    align-items: flex-start;
}
.g-box .btn {
    height: 28px;
}
.imm {
    margin: 9px 0 0 1px;
    letter-spacing: -0.5px;
}
.g-run {
    margin-top: 2px;
    height: 44px;
    padding: 4px 0 0 9px;
    display: flex;
    gap: 4px;
}
.g-run .btn {
    height: 34px;
}
.g-machine {
    height: 60px;
    padding: 6px 0 0 26px;
    display: flex;
    align-items: flex-start;
    box-shadow: inset 0 1px #fff;
}
.machine-label {
    width: 45px;
    margin-top: 7px;
}
.machine {
    width: 82px;
    height: 21px;
    margin-top: 3px;
}
.g-machine .btn {
    height: 27px;
    margin-left: 12px;
}

/* colours */
.colorbar {
    height: 30px;
    flex: none;
    border-top: 1px solid #aca899;
    box-shadow: inset 0 1px #fff;
    border-bottom: 1px solid #aca899;
    display: flex;
}
.swatches {
    width: 933px;
    padding: 7px 0 0 10px;
    border-right: 1px solid #aca899;
    display: flex;
    gap: 8px;
}
.swatches i {
    width: 15px;
    height: 14px;
    flex: none;
    position: relative;
}
.swatches i.current::after {
    content: "";
    position: absolute;
    inset: -4px;
    box-shadow: inset 1px 1px #fff, inset -1px -1px #716f64, inset -2px -2px #aca899;
}
.s1 { background: #000; }
.s2 { background: #0000ff; }
.s3 { background: #ff0000; }
.s4 { background: #00ff00; }
.s5 { background: #ff80c0; }
.s6 { background: #ffff00; }
.s7 { background: #00ffff; }
.s8 { background: #996633; }
.s9 { background: #008000; }
.s10 { background: #8080c0; }
.s11 { background: #800080; }
.s12 { background: #0080c0; }
.s13 { background: #ff8000; }
.s14 { background: #99d6ff; }
.s15 { background: #808080; }
.s16 { background: #000080; }
.s17 { background: #808000; }
.s18 { background: #ff0080; }
.s19 { background: #008080; }
.s20 { background: #80ff00; }
.s21 { background: #cccc33; }
.s22 { background: #990099; }
.s23 { background: #cc99ff; }
.s24 { background: #9999ff; }
.s25 { background: #330033; }
.s26 { background: #408080; }
.s27 { background: #330080; }
.s28 { background: #400040; }
.s29 { background: #222; }
.s30 { background: #333; }
.s31 { background: #444; }
.s32 { background: #555; }
.s33 { background: #5f5f5f; }
.s34 { background: #6a6a6a; }
.s35 { background: #777; }
.s36 { background: #888; }
.s37 { background: #969696; }
.s38 { background: #a0a0a0; }
.s39 { background: #aaa; }
.s40 { background: #b5b5b5; }

/* status bar */
.statusbar {
    height: 19px;
    flex: none;
    display: flex;
    padding-top: 3px;
}
.pane {
    height: 16px;
    padding: 1px 0 0 1px;
    border-left: 1px solid #aca899;
    border-top: 1px solid #aca899;
    white-space: nowrap;
    overflow: hidden;
}
.ready { width: 346px; border-color: transparent; padding-left: 1px; }
.p2 { width: 226px; }
.p3 { width: 325px; }
.p4 { width: 228px; }
.p5 { width: 155px; }

/* taskbar */
.taskbar {
    height: 30px;
    flex: none;
    display: flex;
    align-items: center;
    color: #fff;
    background: linear-gradient(#1f3f9e 0, #3168d5 4%, #4993e6 10%, #3a7fe6 16%, #2663da 22%, #2258d5 40%, #245ddb 60%, #2562df 86%, #2158d4 93%, #1941a5 100%);
}
.startbtn {
    width: 97px;
    height: 30px;
    flex: none;
    display: flex;
    align-items: center;
    padding-left: 10px;
    gap: 4px;
    border-radius: 0 10px 10px 0;
    background: linear-gradient(#3c8c3c 0, #6cb86c 12%, #429a42 25%, #3f983f 70%, #2c7a2c 100%);
    box-shadow: inset -3px -2px 4px #256b25;
}
.startbtn span {
    font-family: "Liberation Sans", sans-serif;
    font-stretch: normal;
    font-weight: bold;
    font-style: italic;
    font-size: 18px;
    text-shadow: 1px 1px 2px #143c14;
}
.task {
    width: 158px;
    height: 25px;
    margin-top: 1px;
    flex: none;
    display: flex;
    align-items: center;
    gap: 4px;
    padding-left: 9px;
    border-radius: 2px;
    background: #3c81f3;
    box-shadow: inset 0 1px #5a98f8;
}
.task.active {
    width: 160px;
    margin-left: 10px;
    background: #1e52b7;
    box-shadow: inset 1px 1px #163f90;
}
.lang {
    margin-left: 637px;
    width: 16px;
    height: 20px;
    margin-top: 2px;
    background: #3d79e0;
    text-align: center;
    line-height: 20px;
    margin-right: 20px;
}
.tray {
    width: 182px;
    height: 30px;
    flex: none;
    display: flex;
    align-items: center;
    gap: 3px;
    padding-left: 9px;
    border-left: 1px solid #0f4aa0;
    background: linear-gradient(#0c59b9 0, #139ee9 8%, #18b5f2 12%, #139beb 18%, #0d8dea 63%, #0f9eed 88%, #137ed7 96%, #095bc9 100%);
}
.tray .ring {
    margin: 0 2px 0 3px;
}
.clock {
    margin-left: 7px;
}

/* dialog */
.dialog {
    position: absolute;
    left: 493px;
    top: 292px;
    width: 296px;
    height: 186px;
    display: flex;
    flex-direction: column;
    border-radius: 7px 7px 0 0;
    background: #0831c8;
}
.dlg-title {
    height: 28px;
    flex: none;
    display: flex;
    align-items: center;
    padding: 0 5px 0 5px;
    border-radius: 7px 7px 0 0;
    color: #fff;
    font-weight: bold;
    font-size: 12px;
    text-shadow: 1px 1px #0a2a90;
    background: linear-gradient(#0a5ae0 0, #3a90f8 8%, #0a62f0 18%, #0058e8 50%, #0064f8 80%, #0a50d0 100%);
}
.dlg-name {
    margin-top: 5px;
}
.dlg-close {
    margin-left: auto;
    width: 20px;
    height: 20px;
    border: 1px solid #fff;
    border-radius: 3px;
    background: radial-gradient(circle at 35% 30%, #e8805c, #d0421e);
}
.dlg-close svg {
    margin: -1px;
}
.dlg-body {
    flex: 1;
    margin: 0 3px 3px 3px;
    padding: 10px 0 0 10px;
    background: #ece9d8;
}
.dlg-frame {
    width: 269px;
    height: 133px;
    border: 1px solid #aca899;
    box-shadow: inset 1px 1px #fff, 1px 1px #fff;
}
.dlg-grid {
    height: 93px;
    padding-top: 8px;
    display: grid;
    grid-template-columns: 67px 53px 93px 52px;
    grid-template-rows: 29px 29px 26px;
    border-bottom: 1px solid #aca899;
    box-shadow: 0 1px #fff;
}
.dlg-label {
    text-align: right;
    padding: 3px 5px 0 0;
}
.dlg-label.right {
    padding-right: 7px;
}
.low {
    margin-top: 2px;
}
.on-dlg {
    width: 49px;
    height: 20px;
}
.power-field {
    width: 51px;
}
.expand {
    align-items: flex-start;
    margin-top: 4px;
}
.expand .check {
    margin: 0 5px 0 0;
}
.dlg-combo {
    width: 50px;
    height: 20px;
    margin-top: 2px;
}
.bidir {
    grid-column: 1 / 3;
    padding: 0 0 4px 27px;
}
.blow {
    padding: 0 0 4px 4px;
}
.dots {
    width: 30px;
    height: 21px;
    margin-left: 5px;
}
.dlg-actions {
    padding: 9px 0 0 60px;
    display: flex;
    gap: 15px;
}
.dlg-btn {
    width: 60px;
    height: 23px;
}
```
